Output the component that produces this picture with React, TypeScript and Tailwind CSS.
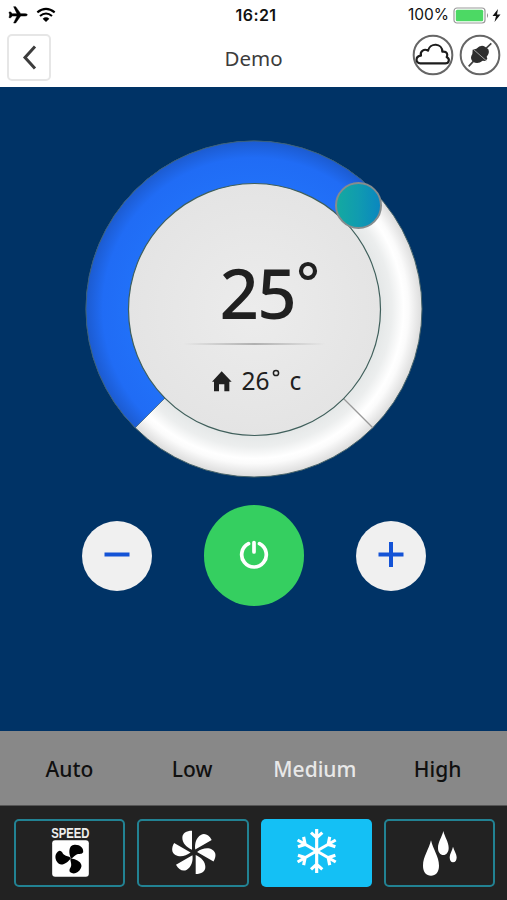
import React from "react";

const labels = ["Auto", "Low", "Medium", "High"];

function StatusBar() {
  return (
    <div className="grid h-[29px] grid-cols-3 items-center bg-white text-[15px] text-[#111]">
      <div className="flex items-center gap-[8px] pl-[8px]">
        <svg className="h-[18px] w-[20px]" viewBox="24 16 60 54">
          <path
            fill="#000"
            stroke="#000"
            strokeWidth="1.500"
            d="M27 34H32L37 39H51L41 18H47L62 39H75Q82 39 82 42.500Q82 46 75 46H62L47 67H41L51 46H37L32 51H27L29 42.500Z"
          />
        </svg>
        <svg className="h-[16px] w-[20px]" viewBox="108 19 60 48">
          <g fill="none" stroke="#000" strokeWidth="6.500">
            <path d="M112 35Q138 14 164 35" />
            <path d="M120 46Q138 31 156 46" />
          </g>
          <path fill="#000" d="M128 54Q138 46 148 54L138 64Z" />
        </svg>
      </div>
      <div className="pl-[5px] text-center font-['Inter',sans-serif] text-[16px] font-semibold tracking-[0.4px]">
        16:21
      </div>
      <div className="flex items-center justify-end gap-[4px] pr-[5px] font-['Inter',sans-serif]">
        <span className="text-[15.5px]">100%</span>
        <svg className="h-[18px] w-[49px]" viewBox="0 0 49 18">
          <rect x="1" y="2" width="31" height="15" rx="3" fill="#fff" stroke="#999" strokeWidth="1.200" />
          <rect x="2.800" y="3.800" width="27.400" height="11.400" rx="1.500" fill="#4cd964" />
          <path d="M34 7Q36 9.500 34 12Z" fill="#888" />
          <path d="M45 3L39.500 10H43L41.500 16L47.500 8.500H44Z" fill="#111" />
        </svg>
      </div>
    </div>
  );
}

function Header() {
  return (
    <header className="grid h-[58px] grid-cols-3 items-start bg-white">
      <button className="mt-[5px] ml-[7px] flex h-[47px] w-[44px] items-center justify-center rounded-[5px] border-2 border-[#e6e6e6]">
        <svg className="h-[26px] w-[16px]" viewBox="0 0 16 26" fill="none" stroke="#3c3c3c" strokeWidth="3">
          <path d="M14 1.500L4 12.500L14 23.500" />
        </svg>
      </button>
      <h1 className="pt-[14px] text-center text-[20.5px] leading-[30px] text-[#3c3c3c]">Demo</h1>
      <div className="flex justify-end gap-[5px] pt-[5px] pr-[6px]">
        <svg className="h-[42px] w-[42px]" viewBox="45 100 126 126">
          <circle cx="108" cy="163" r="58" fill="#fff" stroke="#666" strokeWidth="6" />
          <path
            d="M70 188C55 188 54 167 72 165C68 151 82 143 93 150C99 125 136 127 136 153C151 151 153 163 149 169C160 175 156 188 145 188Z"
            fill="none"
            stroke="#1c1c1c"
            strokeWidth="6.500"
            strokeLinejoin="round"
          />
        </svg>
        <svg className="h-[42px] w-[42px]" viewBox="186 100 126 126">
          <circle cx="249" cy="163" r="58" fill="#fff" stroke="#666" strokeWidth="6" />
          <path d="M215 197L229 182M267 143L283 128" stroke="#444" strokeWidth="5" />
          <path
            d="M227 147L238 144Q252 130 264 138L274 146Q279 158 269 168L271 174L265 181L257 180Q242 192 228 183Q217 173 226 160Z"
            fill="#2e2e2e"
          />
          <path d="M229 146L269 181" stroke="#bbb" strokeWidth="2.500" />
        </svg>
      </div>
    </header>
  );
}

function Dial() {
  return (
    <div className="relative h-[338px] w-[338px]">
      <svg className="absolute inset-0 h-full w-full" viewBox="84.500 140 338 338">
        <defs>
          <radialGradient id="track" gradientUnits="userSpaceOnUse" cx="253.500" cy="309" r="168">
            <stop offset="0.750" stopColor="#e4e7e7" />
            <stop offset="0.820" stopColor="#eceeee" />
            <stop offset="0.890" stopColor="#ffffff" />
            <stop offset="0.920" stopColor="#fbfbfb" />
            <stop offset="1" stopColor="#dcdcdc" />
          </radialGradient>
          <radialGradient id="fill" gradientUnits="userSpaceOnUse" cx="253.500" cy="309" r="168">
            <stop offset="0.750" stopColor="#2170f8" />
            <stop offset="0.900" stopColor="#206cf5" />
            <stop offset="1" stopColor="#1c5bd0" />
          </radialGradient>
          <radialGradient id="face">
            <stop offset="0" stopColor="#ececec" />
            <stop offset="1" stopColor="#e4e4e4" />
          </radialGradient>
          <linearGradient id="knob">
            <stop offset="0" stopColor="#14aaa0" />
            <stop offset="0.500" stopColor="#109bb0" />
            <stop offset="1" stopColor="#0a86c0" />
          </linearGradient>
          <linearGradient id="rule">
            <stop offset="0" stopColor="#777" stopOpacity="0" />
            <stop offset="0.500" stopColor="#777" />
            <stop offset="1" stopColor="#777" stopOpacity="0" />
          </linearGradient>
        </defs>
        <circle cx="253.500" cy="309" r="168" fill="url(#track)" stroke="#48646a" strokeWidth="1" />
        <path
          d="M253.500 309L134.700 427.800A168 168 0 0 1 372.300 190.200Z"
          fill="url(#fill)"
          stroke="#38607a"
          strokeWidth="0.800"
        />
        <path d="M343 398.500L372.300 427.800" stroke="#999" strokeWidth="1.300" />
        <circle cx="254" cy="309.500" r="126" fill="url(#face)" stroke="#3f5f5b" strokeWidth="1.200" />
        <rect x="183" y="343.500" width="142" height="1" fill="url(#rule)" />
        <circle cx="358" cy="205.500" r="22.500" fill="url(#knob)" stroke="#858c8e" strokeWidth="2" />
      </svg>
      <div className="relative flex flex-col text-[#202020]">
        <div className="flex pt-[114px] pl-[135px]">
          <span className="text-[69px] leading-[76px] font-medium tracking-[-1.8px]">25</span>
          <svg className="mt-[7px] ml-[3px] h-[20px] w-[20px]" viewBox="0 0 20 20">
            <circle cx="10" cy="10" r="7" fill="none" stroke="#202020" strokeWidth="4.200" />
          </svg>
        </div>
        <div className="flex items-center pt-[36px] pl-[127px] text-[24.500px] leading-[30px]">
          <svg className="h-[21px] w-[20px]" viewBox="36 361 60 63">
            <path d="M65 362L95 393H88V422H73V401H57V422H42V393H36Z" fill="#202020" />
          </svg>
          <span className="ml-[10px]">26</span>
          <svg className="mb-[16px] ml-[2px] h-[8px] w-[8px]" viewBox="0 0 8 8">
            <circle cx="4" cy="4" r="2.600" fill="none" stroke="#202020" strokeWidth="1.500" />
          </svg>
          <span className="ml-[10px]">c</span>
        </div>
      </div>
    </div>
  );
}

function Controls() {
  return (
    <div className="flex items-center gap-[52px]">
      <button className="flex h-[70px] w-[70px] items-center justify-center rounded-full bg-[#f0f0f0]">
        <svg className="h-[28px] w-[28px]" viewBox="0 0 28 28" stroke="#1453d6" strokeWidth="4">
          <path d="M1.500 12.500H26.500" />
        </svg>
      </button>
      <button className="flex h-[101px] w-[100px] items-center justify-center rounded-full bg-[#35cf60]">
        <svg className="h-[32px] w-[32px]" viewBox="0 1 32 32" fill="none" stroke="#fff" strokeWidth="3.700" strokeLinecap="round">
          <path d="M10.500 4.700A12.300 12.300 0 1 0 21.500 4.700M16 3.500V13" />
        </svg>
      </button>
      <button className="flex h-[70px] w-[70px] items-center justify-center rounded-full bg-[#f0f0f0]">
        <svg className="h-[28px] w-[28px]" viewBox="0 0 28 28" stroke="#1453d6" strokeWidth="4">
          <path d="M1.500 12.500H26.500M14 0V25" />
        </svg>
      </button>
    </div>
  );
}

function SpeedIcon() {
  return (
    <svg className="h-[62px] w-[62px]" viewBox="114.500 36 186 186">
      <text
        x="151"
        y="83"
        textLength="115"
        lengthAdjust="spacingAndGlyphs"
        fill="#eee"
        fontSize="43"
        fontWeight="700"
        fontFamily="Liberation Sans, sans-serif"
      >
        SPEED
      </text>
      <rect x="154" y="91" width="110" height="109" rx="9" fill="#fff" />
      {[0, 120, 240].map((angle) => (
        <path
          key={angle}
          transform={`rotate(${angle} 210 145)`}
          d="M211 146C203 132 202 104 221 104C237 103 249 113 247 127C240 135 236 130 229 133C221 136 219 142 211 146Z"
          fill="#000"
        />
      ))}
    </svg>
  );
}

function FanIcon() {
  return (
    <svg className="h-[54px] w-[54px]" viewBox="105 48 162 162">
      {[0, 60, 120, 180, 240, 300].map((angle) => (
        <path
          key={angle}
          transform={`rotate(${angle} 188.500 127)`}
          d="M183 62V119C166 112 154 98 154 83C154 69 166 62 183 62Z"
          fill="#fff"
        />
      ))}
    </svg>
  );
}

function SnowIcon() {
  return (
    <svg className="h-[54px] w-[54px]" viewBox="102 318 162 162" fill="none" stroke="#fff" strokeWidth="9.500">
      {[0, 60, 120, 180, 240, 300].map((angle) => (
        <path key={angle} transform={`rotate(${angle} 185 393)`} d="M185 393V327M168 338L185 353L202 338" />
      ))}
    </svg>
  );
}

function DropsIcon() {
  return (
    <svg className="h-[54px] w-[54px]" viewBox="94 48 162 162" fill="#fff">
      <path d="M151 91C157 118 175 140 175 167C175 186 165 197 151 197C137 197 127 186 127 167C127 140 145 118 151 91Z" />
      <path d="M188 63C192 81 204 96 204 114C204 127 197 135 188 135C179 135 172 127 172 114C172 96 184 81 188 63Z" />
      <path d="M217 110C220 122 228 131 228 142C228 151 224 157 217 157C211 157 207 151 207 142C207 131 215 122 217 110Z" />
    </svg>
  );
}

export default function App() {
  const modes = [SpeedIcon, FanIcon, SnowIcon, DropsIcon];
  return (
    <div className="flex h-[900px] w-[507px] flex-col overflow-hidden bg-[#222] font-['Noto_Sans','Open_Sans',sans-serif]">
      <StatusBar />
      <Header />
      <main className="flex h-[644px] flex-col items-center gap-[27px] bg-[#003366] pt-[53px]">
        <Dial />
        <Controls />
      </main>
      <div className="grid h-[75px] grid-cols-4 items-center border-b border-[#555] bg-[#888] px-[8px] pt-[3px] text-center text-[21px] font-medium">
        {labels.map((label) => (
          <button key={label} className={label === "Medium" ? "text-[#e8e8e8]" : "text-[#101010]"}>
            {label}
          </button>
        ))}
      </div>
      <nav className="grid grid-cols-4 gap-[12px] pt-[13px] pr-[12px] pl-[14px]">
        {modes.map((Icon, i) => (
          <button
            key={i}
            className={
              "flex h-[68px] items-center justify-center rounded-[5px] " +
              (i === 2 ? "bg-[#14c0f5]" : "border-2 border-[#228293]")
            }
          >
            <Icon />
          </button>
        ))}
      </nav>
    </div>
  );
}
